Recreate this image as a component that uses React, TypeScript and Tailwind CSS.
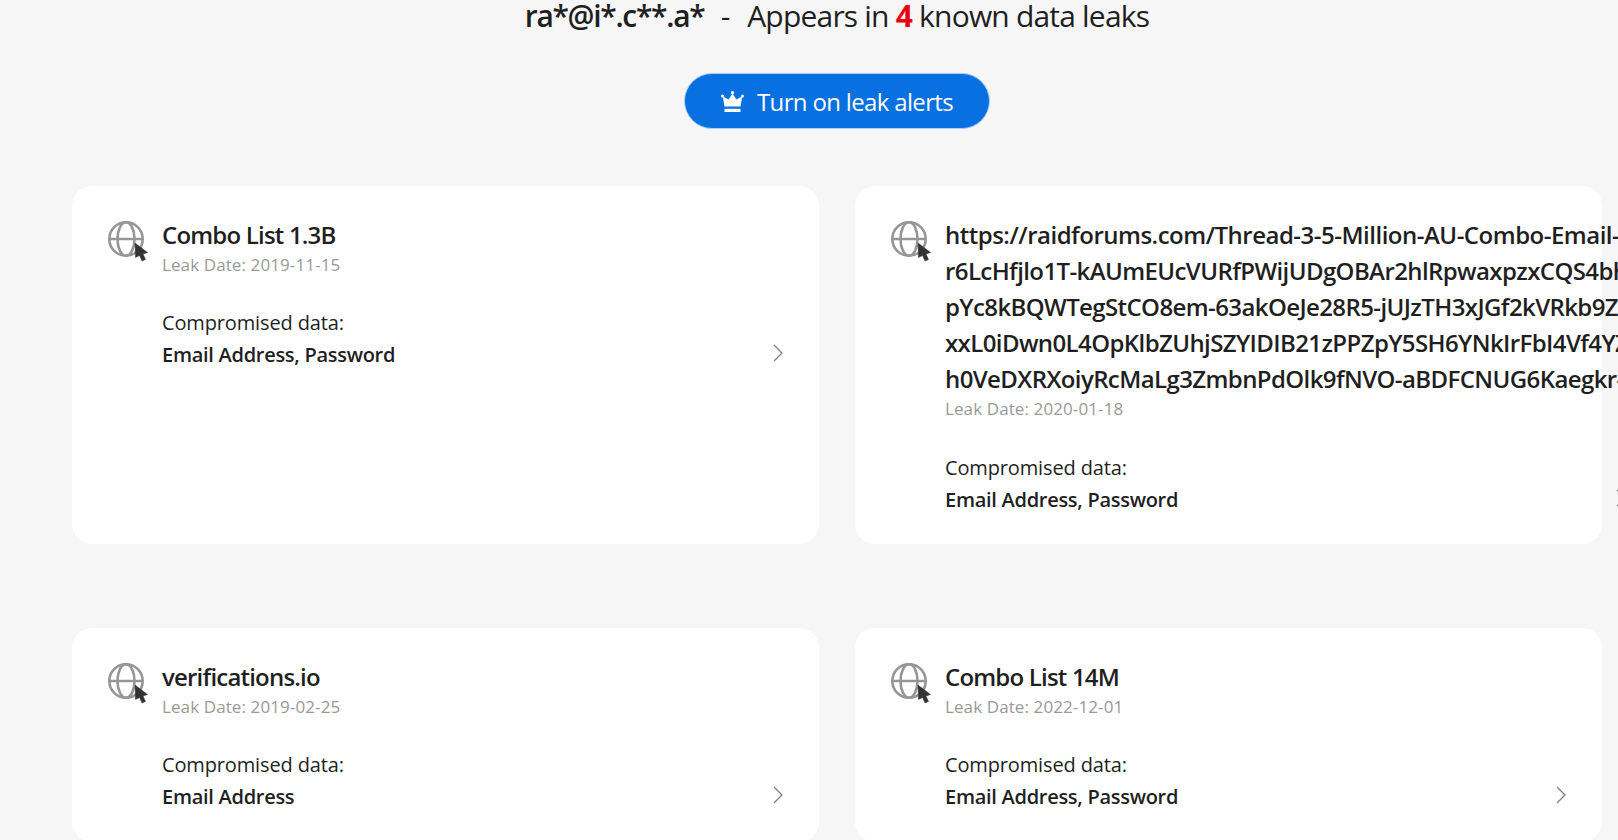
interface Leak {
  title: string[];
  date: string;
  data: string;
}

const LEAKS: Leak[] = [
  { title: ["Combo List 1.3B"], date: "2019-11-15", data: "Email Address, Password" },
  {
    title: [
      "https://raidforums.com/Thread-3-5-Million-AU-Combo-Email-",
      "r6LcHfjlo1T-kAUmEUcVURfPWijUDgOBAr2hlRpwaxpzxCQS4bhKz",
      "pYc8kBQWTegStCO8em-63akOeJe28R5-jUJzTH3xJGf2kVRkb9Zq",
      "xxL0iDwn0L4OpKlbZUhjSZYIDIB21zPPZpY5SH6YNkIrFbI4Vf4YZa",
      "h0VeDXRXoiyRcMaLg3ZmbnPdOlk9fNVO-aBDFCNUG6Kaegkr-x",
    ],
    date: "2020-01-18",
    data: "Email Address, Password",
  },
  { title: ["verifications.io"], date: "2019-02-25", data: "Email Address" },
  { title: ["Combo List 14M"], date: "2022-12-01", data: "Email Address, Password" },
];

function GlobeCursor() {
  return (
    <svg viewBox="0 0 42 42" className="w-[42px] h-[42px] shrink-0 mt-1">
      <g fill="none" stroke="#969696" strokeWidth="2.6">
        <circle cx="18" cy="18" r="16.7" />
        <ellipse cx="18" cy="18" rx="8.5" ry="16.7" />
        <path d="M1.3 18h33.4" />
      </g>
      <path d="M27 22l12.5 9.5-4.5 1.5 2.5 5.5-3.5 1.5-2.5-5.5-4 2z" fill="#333" stroke="#333" strokeWidth="0.5" />
    </svg>
  );
}

function LeakCard({ leak }: { leak: Leak }) {
  const isLong = leak.title.length > 1;
  return (
    <div className={`flex bg-white rounded-[20px] pl-9 pr-[35px] pt-[31px] gap-3 ${isLong ? "pb-7" : "pb-[29px]"}`}>
      <GlobeCursor />
      <div className={isLong ? "w-[682px] shrink-0" : "flex-1 min-w-0"}>
        {leak.title.map((line, i) => (
          <div
            key={line}
            className={`text-[24px] leading-[36px] font-semibold text-[#1f1f1f] whitespace-nowrap ${
              !isLong ? "tracking-[-0.8px]" : i === 0 ? "tracking-[-0.5px]" : "tracking-[-0.6px]"
            }`}
          >
            {line}
          </div>
        ))}
        <div className="text-[17px] leading-[24px] text-[#999999] tracking-[0.1px]">Leak Date: {leak.date}</div>
        <div className={`text-[20px] leading-[32px] text-[#1f1f1f] tracking-[-0.14px] ${isLong ? "mt-[31px]" : "mt-[30px]"}`}>
          Compromised data:
        </div>
        <div className="flex items-center justify-between">
          <span className="text-[20px] leading-[32px] font-semibold text-[#1f1f1f] tracking-[-0.28px]">{leak.data}</span>
          <svg viewBox="0 0 10 18" className="w-[10px] h-[18px] mr-px -mt-1" fill="none" stroke="#808080" strokeWidth="1.3">
            <path d="M1 1l8 8-8 8" />
          </svg>
        </div>
      </div>
    </div>
  );
}

export default function App() {
  return (
    <div className="h-[840px] overflow-hidden bg-[#f6f6f6] pl-[72px] pr-4 font-['Open_Sans',sans-serif]">
      <h1 className="text-center text-[30px] leading-[32px] text-[#1f1f1f] tracking-[-0.8px] whitespace-nowrap">
        <span className="font-semibold tracking-[-1.3px]">ra*@i*.c**.a*</span>
        <span className="whitespace-pre tracking-[0.4px]">{"  -  "}</span>Appears in <span className="font-bold text-[#e60012]">4</span> known data leaks
      </h1>
      <div className="flex justify-center mt-[41px]">
        <button className="flex items-center justify-center gap-[13px] w-[306px] h-[56px] pt-px rounded-full bg-[#0870e0] border border-[#a9cdf3] text-white text-[24px] tracking-[-0.66px]">
          <svg viewBox="0 0 23 21" className="w-[23px] h-[21px]" fill="#fff">
            <circle cx="11.5" cy="1.6" r="1.6" />
            <circle cx="1.5" cy="5" r="1.5" />
            <circle cx="21.5" cy="5" r="1.5" />
            <path d="M11.5 2.5l4 6 5.8-3.2-1.8 10.2h-16L1.7 5.3l5.8 3.2z" />
            <rect x="3.5" y="17.8" width="16" height="3.2" />
          </svg>
          Turn on leak alerts
        </button>
      </div>
      <div className="grid grid-cols-[747px_747px] gap-x-9 gap-y-[84px] mt-[57px]">
        {LEAKS.map((leak) => (
          <LeakCard key={leak.date} leak={leak} />
        ))}
      </div>
    </div>
  );
}
